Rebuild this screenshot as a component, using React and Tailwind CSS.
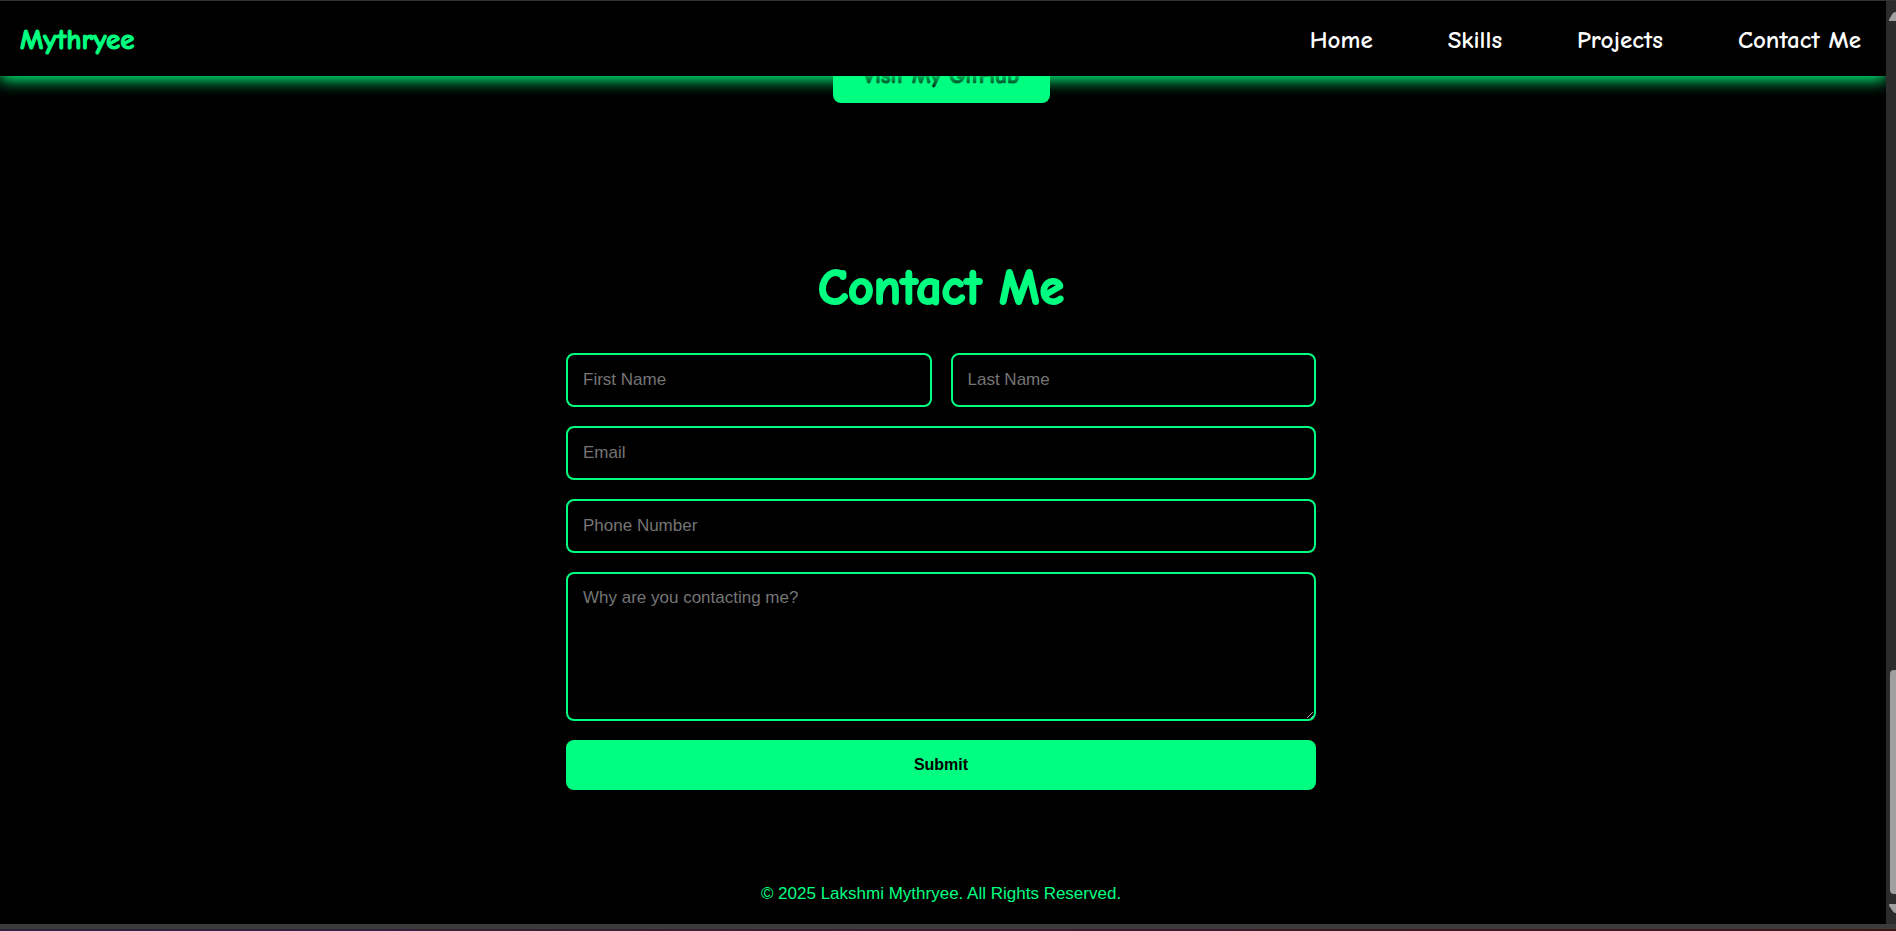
const navLinks = [
  { label: "Home", href: "#home" },
  { label: "Skills", href: "#skills" },
  { label: "Projects", href: "#projects" },
  { label: "Contact Me", href: "#contact" },
];

const comic = "font-['Comic_Sans_MS','Comic_Neue',cursive]";
const field =
  "block w-full rounded-lg border-2 border-[#00ff80] bg-black px-[15px] text-[17px] text-white outline-none placeholder:text-[#757575]";

function Field({ id, label, type = "text" }) {
  return (
    <div className="min-w-0 flex-1">
      <input id={id} name={id} type={type} aria-label={label} placeholder={label} className={`${field} h-[54px]`} />
    </div>
  );
}

function Scrollbar() {
  return (
    <div aria-hidden="true" className="flex w-[10px] shrink-0 flex-col items-end overflow-hidden bg-[#2c2c2c] py-2">
      <svg className="h-3 w-[7px]" viewBox="0 0 7 12">
        <path d="M0 12 V10.5 L4 4 Q5.5 3 7 3 V12 Z" fill="#a0a0a0" />
      </svg>
      <div className="flex-[650]" />
      <div className="w-[6px] flex-[225] rounded-l bg-[#a09f9f]" />
      <div className="flex-[10]" />
      <svg className="h-3 w-[7px]" viewBox="0 0 7 12">
        <path d="M0 1 Q0 0 1 0 H7 V9 Q5 9 4 7.5 L0 1.5 Z" fill="#a0a0a0" />
      </svg>
    </div>
  );
}

export default function App() {
  return (
    <div className="flex min-h-screen flex-col border-t border-[#333] bg-black font-['Liberation_Sans',Arial,sans-serif]">
      <div className="flex flex-1">
        <div className="flex min-w-0 flex-1 flex-col overflow-hidden">
          <header className="relative z-10 flex h-[75px] items-center justify-between bg-black pt-0.5 pr-[25px] pl-5 shadow-[0_4px_15px_#00ff80]">
            <a href="#home" className={`${comic} text-[29px] font-bold text-[#00ff80] [-webkit-text-stroke:1px_#00ff80]`}>Mythryee</a>
            <nav className={`${comic} flex gap-[75px] text-[25px] font-bold text-white`}>
              {navLinks.map((link) => (
                <a key={link.label} href={link.href}>{link.label}</a>
              ))}
            </nav>
          </header>

          <main className="flex flex-col items-center pr-1">
            <a
              href="https://github.com/"
              className={`${comic} -mt-[27px] flex h-[54px] w-[217px] items-center justify-center rounded-lg bg-[#00ff80] text-[23px] font-bold text-black [-webkit-text-stroke:1px_#000]`}
            >
              Visit My GitHub
            </a>

            <section id="contact" className="mt-[155px] flex w-full max-w-[750px] flex-col">
              <h2 className={`${comic} text-center text-[50px] leading-[60px] font-bold text-[#00ff80] [-webkit-text-stroke:2px_#00ff80]`}>Contact Me</h2>
              <form className="mt-[35px] flex flex-col gap-[19px]" onSubmit={(e) => e.preventDefault()}>
                <div className="flex gap-[19px]">
                  <Field id="firstName" label="First Name" />
                  <Field id="lastName" label="Last Name" />
                </div>
                <Field id="email" label="Email" type="email" />
                <Field id="phone" label="Phone Number" type="tel" />
                <textarea
                  id="message"
                  name="message"
                  aria-label="Why are you contacting me?"
                  placeholder="Why are you contacting me?"
                  className={`${field} h-[149px] resize-y pt-[11px]`}
                />
                <button type="submit" className="h-[50px] rounded-lg bg-[#00ff80] text-base font-bold text-black">
                  Submit
                </button>
              </form>
            </section>
          </main>

          <footer className="mt-[92px] pr-1 text-center text-[17px] leading-6 text-[#00ff80]">
            © 2025 Lakshmi Mythryee. All Rights Reserved.
          </footer>
        </div>
        <Scrollbar />
      </div>
      <div className="h-[5px] bg-[#3b3b3b]" />
      <div className="h-[2px] bg-linear-to-r from-[#2b2440] via-[#3d1c33] to-[#3d1618]" />
    </div>
  );
}
